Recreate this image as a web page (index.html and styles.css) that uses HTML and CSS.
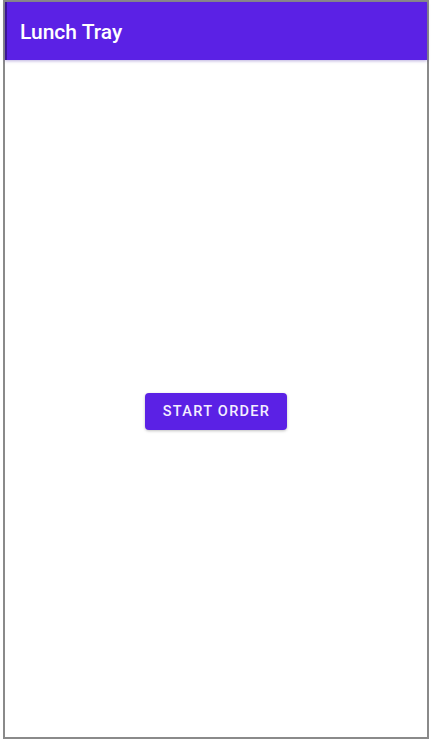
FILE: index.html
```html
<!DOCTYPE html>
<html>
<head>
<meta charset="utf-8">
<link rel="stylesheet" href="styles.css">
</head>
<body>
<div class="frame">
  <header class="app-bar">
    <h1 class="title">Lunch Tray</h1>
  </header>
  <main class="content">
    <button class="start-btn">START ORDER</button>
  </main>
</div>
</body>
</html>
```
FILE: styles.css
```css
html, body {
  margin: 0;
  padding: 0;
  background: #ffffff;
}
.frame {
  margin: 0 3px 3px 3px;
  height: 735px;
  border: 2px solid #8a8a8a;
  display: flex;
  flex-direction: column;
  font-family: Roboto, "Liberation Sans", sans-serif;
  background: #ffffff;
}
.app-bar {
  height: 58px;
  background: #5b21e5;
  display: flex;
  align-items: center;
  padding-left: 15px;
  box-shadow: 0 1px 3px rgba(60, 30, 160, 0.35), inset 2px 0 0 #3a1596;
  position: relative;
  z-index: 1;
}
.title {
  margin: 0;
  color: #ffffff;
  font-size: 21px;
  font-weight: 500;
  line-height: 28px;
  padding-top: 2px;
}
.content {
  flex: 1;
  display: flex;
  align-items: center;
  justify-content: center;
  padding-top: 26px;
}
.start-btn {
  height: 37px;
  width: 142px;
  border: none;
  border-radius: 4px;
  background: #5b21e5;
  color: #f4efff;
  font-family: Roboto, "Liberation Sans", sans-serif;
  font-size: 14.5px;
  font-weight: 500;
  letter-spacing: 1.3px;
  box-shadow: 0 1px 3px rgba(0, 0, 0, 0.25);
  padding: 0 0 0 1px;
}
```
